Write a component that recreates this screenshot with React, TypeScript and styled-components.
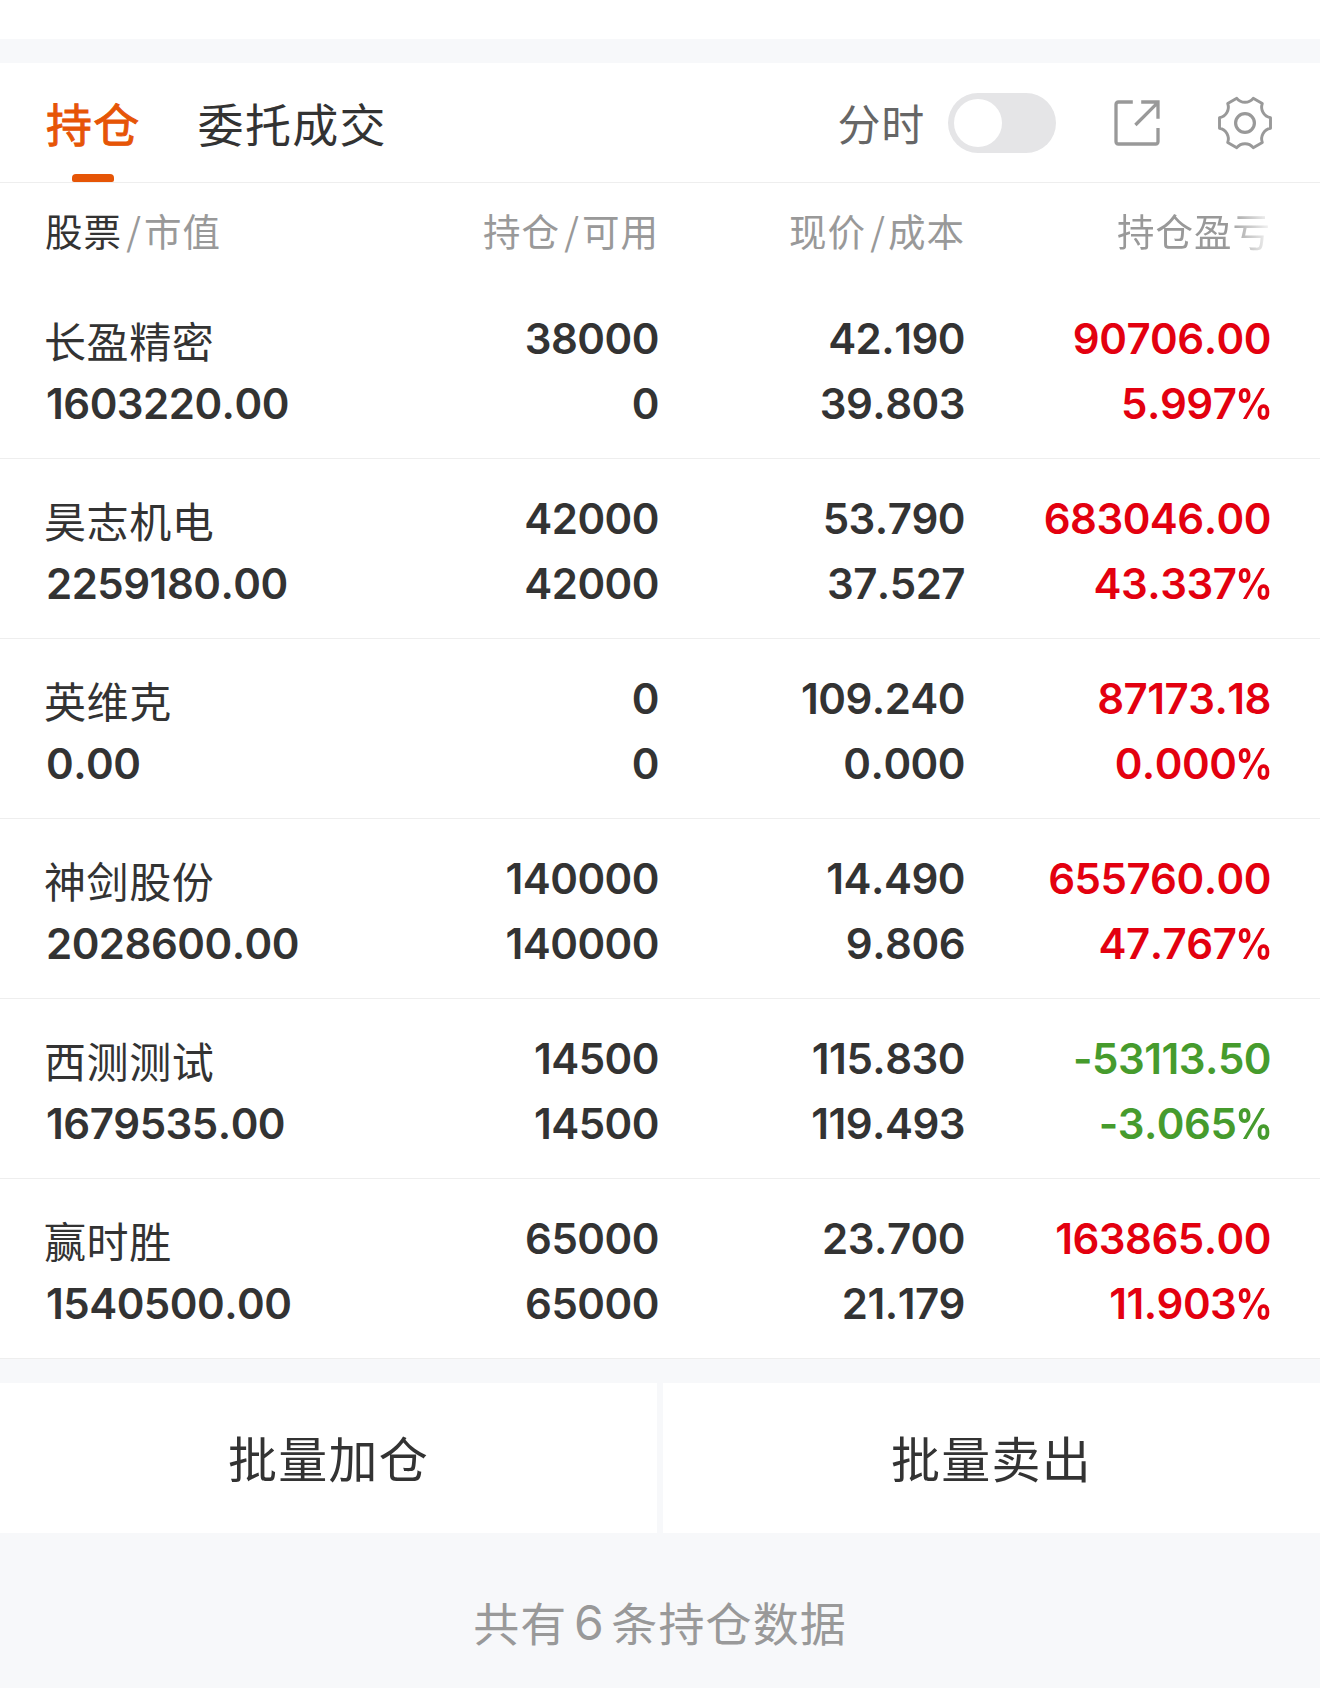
import React, { useState } from "react";
import styled, { createGlobalStyle } from "styled-components";

const GlobalStyle = createGlobalStyle`
  * { box-sizing: border-box; }
  body {
    margin: 0;
    background: #f7f8fa;
    color: #333;
    font-family: "Noto Sans CJK SC", sans-serif;
  }
  button {
    margin: 0;
    padding: 0;
    border: 0;
    background: none;
    color: inherit;
    font: inherit;
    cursor: pointer;
  }
`;

const Page = styled.main`
  width: 1320px;
  height: 1688px;
  display: flex;
  flex-direction: column;
  overflow: hidden;
  background: #f7f8fa;
`;

const TopStrip = styled.div`
  height: 39px;
  margin-bottom: 24px;
  background: #fff;
`;

const Panel = styled.section`
  background: #fff;
`;

const Toolbar = styled.header`
  display: flex;
  justify-content: space-between;
  height: 120px;
  padding: 0 48px 0 46px;
  border-bottom: 1px solid #eeeeee;
`;

const Tabs = styled.nav`
  display: flex;
  gap: 57px;
`;

const Tab = styled.button<{ $active?: boolean }>`
  display: flex;
  flex-direction: column;
  align-items: center;
  color: ${(p) => (p.$active ? "#e65506" : "#333")};
  font-size: 46px;
  letter-spacing: 1.3px;
  line-height: 118px;
  -webkit-text-stroke: ${(p) => (p.$active ? "0.9px #e65506" : "0")};

  &::after {
    content: "";
    width: 42px;
    height: 8px;
    margin-top: -7px;
    border-radius: 4px 4px 2px 2px;
    background: ${(p) => (p.$active ? "#e65506" : "transparent")};
  }
`;

const Tools = styled.div`
  display: flex;
  align-items: center;
  height: 119px;
`;

const ToolLabel = styled.span`
  margin-right: 23px;
  color: #666;
  font-size: 43px;
  letter-spacing: 0.7px;
  line-height: 60px;
  padding-bottom: 2px;
`;

const Switch = styled.button<{ $on: boolean }>`
  display: flex;
  justify-content: ${(p) => (p.$on ? "flex-end" : "flex-start")};
  width: 108px;
  height: 60px;
  margin-right: 58px;
  padding: 6px;
  border-radius: 30px;
  background: ${(p) => (p.$on ? "#e65506" : "#e5e5e7")};
`;

const Knob = styled.span`
  width: 48px;
  height: 48px;
  border-radius: 50%;
  background: #fff;
`;

const IconButton = styled.button`
  display: flex;
  color: #999;
  & + & {
    margin-left: 58px;
  }
`;

const Columns = styled.div`
  display: grid;
  grid-template-columns: 1fr 306px 306px 306px;
  padding: 0 49px 0 45px;
`;

const HeadRow = styled(Columns)`
  height: 96px;
  align-items: center;
`;

const HeadCell = styled.div<{ $start?: boolean; $faded?: boolean }>`
  display: flex;
  justify-content: ${(p) => (p.$start ? "flex-start" : "flex-end")};
  color: #999;
  font-size: 37.5px;
  letter-spacing: 1px;
  line-height: 56px;
  padding-bottom: 2px;
  mask-image: ${(p) =>
    p.$faded ? "linear-gradient(to right, #000 262px, transparent 310px)" : "none"};
`;

const Strong = styled.span`
  color: #333;
`;

const Slash = styled.span`
  width: 22px;
  padding-left: 2px;
  text-align: center;
`;

const Row = styled(Columns)`
  height: 180px;
  padding-top: 27px;
  border-bottom: 1px solid #eeeeee;
`;

type Tone = "plain" | "up" | "down";
const tones: Record<Tone, string> = { plain: "#333", up: "#e3000f", down: "#469b2d" };

const Cell = styled.div<{ $start?: boolean; $tone?: Tone }>`
  display: flex;
  flex-direction: column;
  align-items: ${(p) => (p.$start ? "flex-start" : "flex-end")};
  color: ${(p) => tones[p.$tone ?? "plain"]};
`;

const StockName = styled.span`
  height: 65px;
  margin-left: -1px;
  font-size: 42px;
  letter-spacing: 0.6px;
  line-height: 67px;
`;

const Figure = styled.span<{ $indent?: boolean }>`
  margin-left: ${(p) => (p.$indent ? "1px" : "0")};
  font-family: Inter, sans-serif;
  font-size: 42px;
  font-weight: 600;
  font-kerning: none;
  letter-spacing: -0.5px;
  line-height: 65px;
`;

const Percent = styled.span`
  display: inline-block;
  margin: 0 -1.5px 0 -6px;
  font-weight: 700;
  transform: scaleX(0.87);
  transform-origin: right center;
`;

const Actions = styled.div`
  display: grid;
  grid-template-columns: 1fr 1fr;
  gap: 6px;
  margin-top: 24px;
`;

const ActionButton = styled.button`
  height: 150px;
  padding-bottom: 3px;
  background: #fff;
  font-size: 49px;
  letter-spacing: 1.3px;
`;

const Summary = styled.p`
  display: flex;
  justify-content: center;
  margin: 0;
  padding-top: 51px;
  color: #999;
  font-size: 46px;
  letter-spacing: 1.1px;
  line-height: 74px;
`;

const Count = styled.span`
  width: 44px;
  padding-top: 2px;
  font-family: Inter, sans-serif;
  font-size: 48px;
  text-align: center;
`;

const ShareIcon = () => (
  <svg width="46" height="46" viewBox="0 0 46 46" fill="none" stroke="currentColor" strokeWidth="3.3">
    <path d="M18.8 2H4.5Q2 2 2 4.5V41.5Q2 44 4.5 44H41.5Q44 44 44 41.5V28" />
    <path d="M27.2 2H44V18.8M21.4 25L43.5 2.8" />
  </svg>
);

const GearIcon = () => (
  <svg
    width="54"
    height="54"
    viewBox="-27 -27 54 54"
    fill="none"
    stroke="currentColor"
    strokeWidth="2.9"
    strokeLinejoin="round"
  >
    <path d="M25.5-5.3V5.3A10.6 10.6 0 0 0 17.3 19.4L8.2 24.7A10.6 10.6 0 0 0-8.2 24.7L-17.3 19.4A10.6 10.6 0 0 0-25.5 5.3V-5.3A10.6 10.6 0 0 0-17.3-19.4L-8.2-24.7A10.6 10.6 0 0 0 8.2-24.7L17.3-19.4A10.6 10.6 0 0 0 25.5-5.3Z" />
    <circle r="9.4" strokeWidth="3.2" />
  </svg>
);

interface Holding {
  name: string;
  value: string;
  held: string;
  available: string;
  price: string;
  cost: string;
  profit: string;
  rate: string;
}

const holdings: Holding[] = [
  { name: "长盈精密", value: "1603220.00", held: "38000", available: "0", price: "42.190", cost: "39.803", profit: "90706.00", rate: "5.997" },
  { name: "昊志机电", value: "2259180.00", held: "42000", available: "42000", price: "53.790", cost: "37.527", profit: "683046.00", rate: "43.337" },
  { name: "英维克", value: "0.00", held: "0", available: "0", price: "109.240", cost: "0.000", profit: "87173.18", rate: "0.000" },
  { name: "神剑股份", value: "2028600.00", held: "140000", available: "140000", price: "14.490", cost: "9.806", profit: "655760.00", rate: "47.767" },
  { name: "西测测试", value: "1679535.00", held: "14500", available: "14500", price: "115.830", cost: "119.493", profit: "-53113.50", rate: "-3.065" },
  { name: "赢时胜", value: "1540500.00", held: "65000", available: "65000", price: "23.700", cost: "21.179", profit: "163865.00", rate: "11.903" },
];

export default function App() {
  const [live, setLive] = useState(false);
  return (
    <Page>
      <GlobalStyle />
      <TopStrip />
      <Panel>
        <Toolbar>
          <Tabs>
            <Tab $active>持仓</Tab>
            <Tab>委托成交</Tab>
          </Tabs>
          <Tools>
            <ToolLabel>分时</ToolLabel>
            <Switch $on={live} role="switch" aria-checked={live} onClick={() => setLive(!live)}>
              <Knob />
            </Switch>
            <IconButton>
              <ShareIcon />
            </IconButton>
            <IconButton>
              <GearIcon />
            </IconButton>
          </Tools>
        </Toolbar>
        <HeadRow>
          <HeadCell $start>
            <Strong>股票</Strong>
            <Slash>/</Slash>市值
          </HeadCell>
          <HeadCell>
            持仓<Slash>/</Slash>可用
          </HeadCell>
          <HeadCell>
            现价<Slash>/</Slash>成本
          </HeadCell>
          <HeadCell $faded>持仓盈亏</HeadCell>
        </HeadRow>
        {holdings.map((h) => (
          <Row key={h.name}>
            <Cell $start>
              <StockName>{h.name}</StockName>
              <Figure $indent>{h.value}</Figure>
            </Cell>
            <Cell>
              <Figure>{h.held}</Figure>
              <Figure>{h.available}</Figure>
            </Cell>
            <Cell>
              <Figure>{h.price}</Figure>
              <Figure>{h.cost}</Figure>
            </Cell>
            <Cell $tone={h.profit.startsWith("-") ? "down" : "up"}>
              <Figure>{h.profit}</Figure>
              <Figure>
                {h.rate}
                <Percent>%</Percent>
              </Figure>
            </Cell>
          </Row>
        ))}
      </Panel>
      <Actions>
        <ActionButton>批量加仓</ActionButton>
        <ActionButton>批量卖出</ActionButton>
      </Actions>
      <Summary>
        共有<Count>{holdings.length}</Count>条持仓数据
      </Summary>
    </Page>
  );
}
